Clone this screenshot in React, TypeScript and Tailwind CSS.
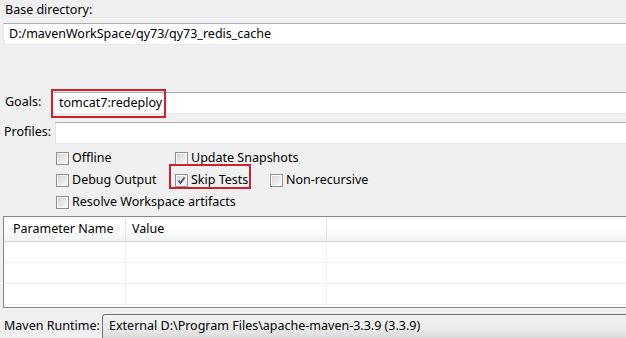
import React from "react";

function Checkbox({ checked = false }: { checked?: boolean }) {
  return (
    <span className="relative inline-block w-[13px] h-[13px] shrink-0 border border-[#8e8f8f] bg-white">
      <span className="absolute inset-[1px] bg-gradient-to-br from-[#d6d6d6] to-[#f7f7f7]" />
      {checked && (
        <svg className="absolute inset-0" width="11" height="11" viewBox="0 0 11 11">
          <path d="M2.5 5.5 L4.5 8 L8.5 2.5" fill="none" stroke="#4a5a7a" strokeWidth="1.8" />
        </svg>
      )}
    </span>
  );
}

function CheckItem({ label, checked }: { label: string; checked?: boolean }) {
  return (
    <div className="flex items-center gap-[3px] h-[22px] whitespace-nowrap">
      <Checkbox checked={checked} />
      <span>{label}</span>
    </div>
  );
}

function TextInput({ value, className = "" }: { value?: string; className?: string }) {
  return (
    <div
      className={
        "h-[22px] shrink-0 bg-white border-t border-t-[#abadb3] border-l border-l-[#e2e3ea] border-b border-b-[#e3e9ef] leading-[20px] pl-[5px] whitespace-nowrap " +
        className
      }
    >
      {value}
    </div>
  );
}

export default function App() {
  return (
    <div
      className="w-[626px] h-[338px] overflow-hidden bg-[#f0f0f0] text-[12.5px] text-black"
      style={{ fontFamily: '"Noto Sans", "Open Sans", sans-serif' }}
    >
      <div className="h-[23px] leading-[20px] pl-[5px]">Base directory:</div>
      <TextInput value="D:/mavenWorkSpace/qy73/qy73_redis_cache" className="ml-[3px] w-[640px]" />
      <div className="h-[47px]" />
      <div className="flex h-[22px]">
        <div className="w-[53px] shrink-0 pl-[5px] leading-[20px] whitespace-nowrap">Goals:</div>
        <div className="relative shrink-0">
          <TextInput value="tomcat7:redeploy" className="w-[600px]" />
          <div className="absolute left-[-2px] top-[-3px] w-[115px] h-[29px] border-[2.5px] border-[#d0202a]" />
        </div>
      </div>
      <div className="h-[8px]" />
      <div className="flex h-[22px]">
        <div className="w-[55px] shrink-0 pl-[4px] leading-[20px] whitespace-nowrap">Profiles:</div>
        <TextInput className="w-[600px]" />
      </div>
      <div className="h-[3px]" />
      <div className="ml-[56px] grid grid-cols-[119px_95px_auto]">
        <CheckItem label="Offline" />
        <div className="col-span-2">
          <CheckItem label="Update Snapshots" />
        </div>
        <CheckItem label="Debug Output" />
        <div className="relative">
          <CheckItem label="Skip Tests" checked />
          <div className="absolute left-[-6px] top-[-5px] w-[82px] h-[25px] border-[2.5px] border-[#d0202a]" />
        </div>
        <CheckItem label="Non-recursive" />
        <div className="col-span-3">
          <CheckItem label="Resolve Workspace artifacts" />
        </div>
      </div>
      <div className="h-[3px]" />
      <div className="ml-[3px] w-[640px] h-[92px] border border-[#828790] bg-white flex flex-col">
        <div className="flex h-[25px] bg-gradient-to-b from-white from-40% to-[#f1f2f4] border-b border-b-[#d5d5d5] leading-[24px] shrink-0">
          <div className="w-[122px] shrink-0 pl-[9px] border-r border-r-[#e3e4e6] whitespace-nowrap">Parameter Name</div>
          <div className="w-[201px] shrink-0 pl-[6px] border-r border-r-[#e3e4e6]">Value</div>
          <div className="flex-1" />
        </div>
        {[0, 1, 2].map((i) => (
          <div key={i} className="flex h-[21px] border-b border-b-[#f0f0f0] shrink-0">
            <div className="w-[122px] shrink-0 border-r border-r-[#f0f0f0]" />
            <div className="w-[201px] shrink-0 border-r border-r-[#f0f0f0]" />
            <div className="flex-1" />
          </div>
        ))}
      </div>
      <div className="h-[6px]" />
      <div className="flex h-[30px]">
        <div className="w-[102px] shrink-0 pl-[4px] leading-[24px] whitespace-nowrap">Maven Runtime:</div>
        <div className="w-[600px] shrink-0 h-[30px] rounded-tl-[3px] border border-[#707070] leading-[22px] pl-[6px] whitespace-nowrap bg-gradient-to-b from-[#f2f2f2] via-[#ebebeb] via-50% to-[#cfcfcf]">
          External D:\Program Files\apache-maven-3.3.9 (3.3.9)
        </div>
      </div>
    </div>
  );
}
